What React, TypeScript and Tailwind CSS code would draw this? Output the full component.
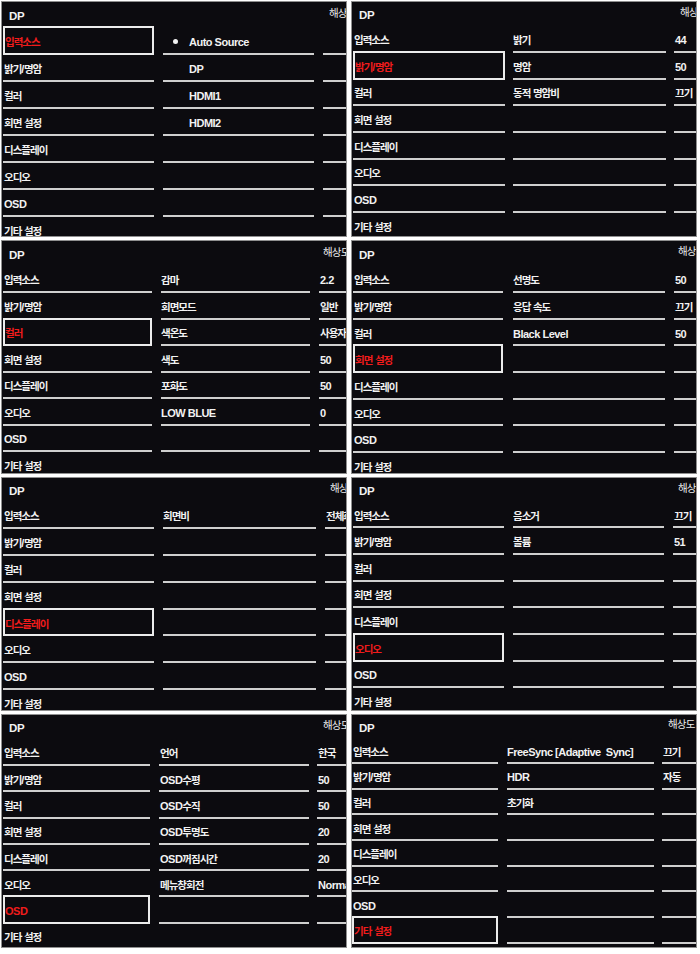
import React from "react";

type Panel = {
  sel: number;
  head: string;
  row: string;
  left: string;
  mid: string;
  right: string;
  resX: string;
  midPad: string;
  bullet?: boolean;
  items: [string, string][];
};

const menu = ["입력소스", "밝기/명암", "컬러", "회면 설정", "디스플레이", "오디오", "OSD", "기타 설정"];

const panels: Panel[] = [
  {
    sel: 0,
    head: "h-[26px]",
    row: "h-[27px]",
    left: "ml-[1px] w-[151px]",
    mid: "ml-[9px] w-[151px]",
    right: "ml-[9px]",
    resX: "w-[327px]",
    midPad: "pl-[26px]",
    bullet: true,
    items: [
      ["Auto Source", ""],
      ["DP", ""],
      ["HDMI1", ""],
      ["HDMI2", ""],
    ],
  },
  {
    sel: 1,
    head: "h-[24.3px]",
    row: "h-[26.67px]",
    left: "ml-[1px] w-[152px]",
    mid: "ml-[8px] w-[153px]",
    right: "ml-[8px]",
    resX: "w-[328px]",
    midPad: "pl-[0px]",
    items: [
      ["밝기", "44"],
      ["명암", "50"],
      ["동적 명암비", "끄기"],
    ],
  },
  {
    sel: 2,
    head: "h-[25.5px]",
    row: "h-[26.5px]",
    left: "ml-[1px] w-[149px]",
    mid: "ml-[9px] w-[149px]",
    right: "ml-[9px]",
    resX: "w-[321px]",
    midPad: "pl-[0px]",
    items: [
      ["감마", "2.2"],
      ["회면모드", "일반"],
      ["색온도", "사용자"],
      ["색도", "50"],
      ["포화도", "50"],
      ["LOW BLUE", "0"],
    ],
  },
  {
    sel: 3,
    head: "h-[25.3px]",
    row: "h-[26.7px]",
    left: "ml-[1px] w-[150px]",
    mid: "ml-[10px] w-[152px]",
    right: "ml-[9px]",
    resX: "w-[326px]",
    midPad: "pl-[0px]",
    items: [
      ["선명도", "50"],
      ["응답 속도", "끄기"],
      ["Black Level", "50"],
    ],
  },
  {
    sel: 4,
    head: "h-[24px]",
    row: "h-[26.9px]",
    left: "ml-[1px] w-[151px]",
    mid: "ml-[9px] w-[153px]",
    right: "ml-[9px]",
    resX: "w-[328px]",
    midPad: "pl-[0px]",
    items: [["회면비", "전체화면"]],
  },
  {
    sel: 5,
    head: "h-[23.7px]",
    row: "h-[26.67px]",
    left: "ml-[1px] w-[151px]",
    mid: "ml-[9px] w-[151px]",
    right: "ml-[9px]",
    resX: "w-[326px]",
    midPad: "pl-[0px]",
    items: [
      ["음소거", "끄기"],
      ["볼륨", "51"],
    ],
  },
  {
    sel: 6,
    head: "h-[24.7px]",
    row: "h-[26.3px]",
    left: "ml-[1px] w-[147px]",
    mid: "ml-[9px] w-[150px]",
    right: "ml-[8px]",
    resX: "w-[321px]",
    midPad: "pl-[1px]",
    items: [
      ["언어", "한국"],
      ["OSD수평", "50"],
      ["OSD수직", "50"],
      ["OSD투명도", "20"],
      ["OSD꺼짐시간", "20"],
      ["메뉴창회전", "Normal"],
    ],
  },
  {
    sel: 7,
    head: "h-[23.3px]",
    row: "h-[25.7px]",
    left: "ml-[0px] w-[146px]",
    mid: "ml-[9px] w-[147px]",
    right: "ml-[8px]",
    resX: "w-[316px]",
    midPad: "pl-[0px]",
    items: [
      ["FreeSync [Adaptive  Sync]", "끄기"],
      ["HDR", "자동"],
      ["초기화", ""],
    ],
  },
];

const isHangul = (s: string) => /[\u3131-\uD79D]/.test(s);

function T({ s }: { s: string }) {
  const parts = s.split(/([\u3131-\uD79D]+)/).filter((p) => p.length > 0);
  return (
    <span className="leading-none whitespace-pre">
      {parts.map((p, i) =>
        isHangul(p) ? (
          <span key={i} className="text-[10.5px] tracking-[-1px] leading-none">
            {p}
          </span>
        ) : (
          <span key={i} className="text-[11px] tracking-[-0.5px] leading-none">
            {p}
          </span>
        )
      )}
    </span>
  );
}

function PanelView({ p }: { p: Panel }) {
  return (
    <div className="bg-[#0c0b0f] border border-[#8f8f8f] overflow-hidden flex flex-col">
      <div className={`flex items-center shrink-0 ${p.head}`}>
        <div className={`shrink-0 pl-[7px] ${p.resX}`}>
          <span className="text-[11.5px] leading-none tracking-[-0.3px]">DP</span>
        </div>
        <span className="shrink-0 whitespace-nowrap text-[10.5px] font-normal leading-none mb-[4px] tracking-[-0.8px] text-[#ededed]">
          해상도
        </span>
      </div>
      {menu.map((m, i) => {
        const item = p.items[i];
        const selected = i === p.sel;
        return (
          <div key={i} className={`flex shrink-0 ${p.row}`}>
            {selected ? (
              <div
                className={`-mt-[2px] flex items-center pt-[1px] overflow-hidden whitespace-nowrap border-2 border-[#ececec] text-[#f01c1c] ${p.left}`}
              >
                <T s={m} />
              </div>
            ) : (
              <div
                className={`flex items-center pt-[1px] pl-[1px] overflow-hidden whitespace-nowrap border-b-2 border-[#cfcfcf] ${p.left}`}
              >
                <T s={m} />
              </div>
            )}
            <div
              className={`flex items-center pt-[1px] overflow-hidden whitespace-nowrap border-b-2 border-[#cfcfcf] ${p.mid} ${
                p.bullet && i === 0 ? "pl-[10px]" : p.midPad
              }`}
            >
              {p.bullet && i === 0 && <span className="w-[5px] h-[5px] rounded-full bg-[#f2f2f2] mr-[11px] shrink-0" />}
              {item && <T s={item[0]} />}
            </div>
            <div className={`flex-1 flex items-center pt-[1px] pl-[1px] overflow-hidden whitespace-nowrap border-b-2 border-[#cfcfcf] ${p.right}`}>
              {item && item[1] && <T s={item[1]} />}
            </div>
          </div>
        );
      })}
    </div>
  );
}

export default function App() {
  return (
    <div className="w-[700px] h-[954px] bg-white pt-[1px] pl-[1px] font-['Liberation_Sans','Noto_Sans_CJK_KR',sans-serif] font-bold text-[#f2f2f2]">
      <div className="grid grid-cols-[346px_346px] grid-rows-[236px_234px_234px_234px] gap-x-[4px] gap-y-[3px]">
        {panels.map((p, i) => (
          <PanelView key={i} p={p} />
        ))}
      </div>
    </div>
  );
}
